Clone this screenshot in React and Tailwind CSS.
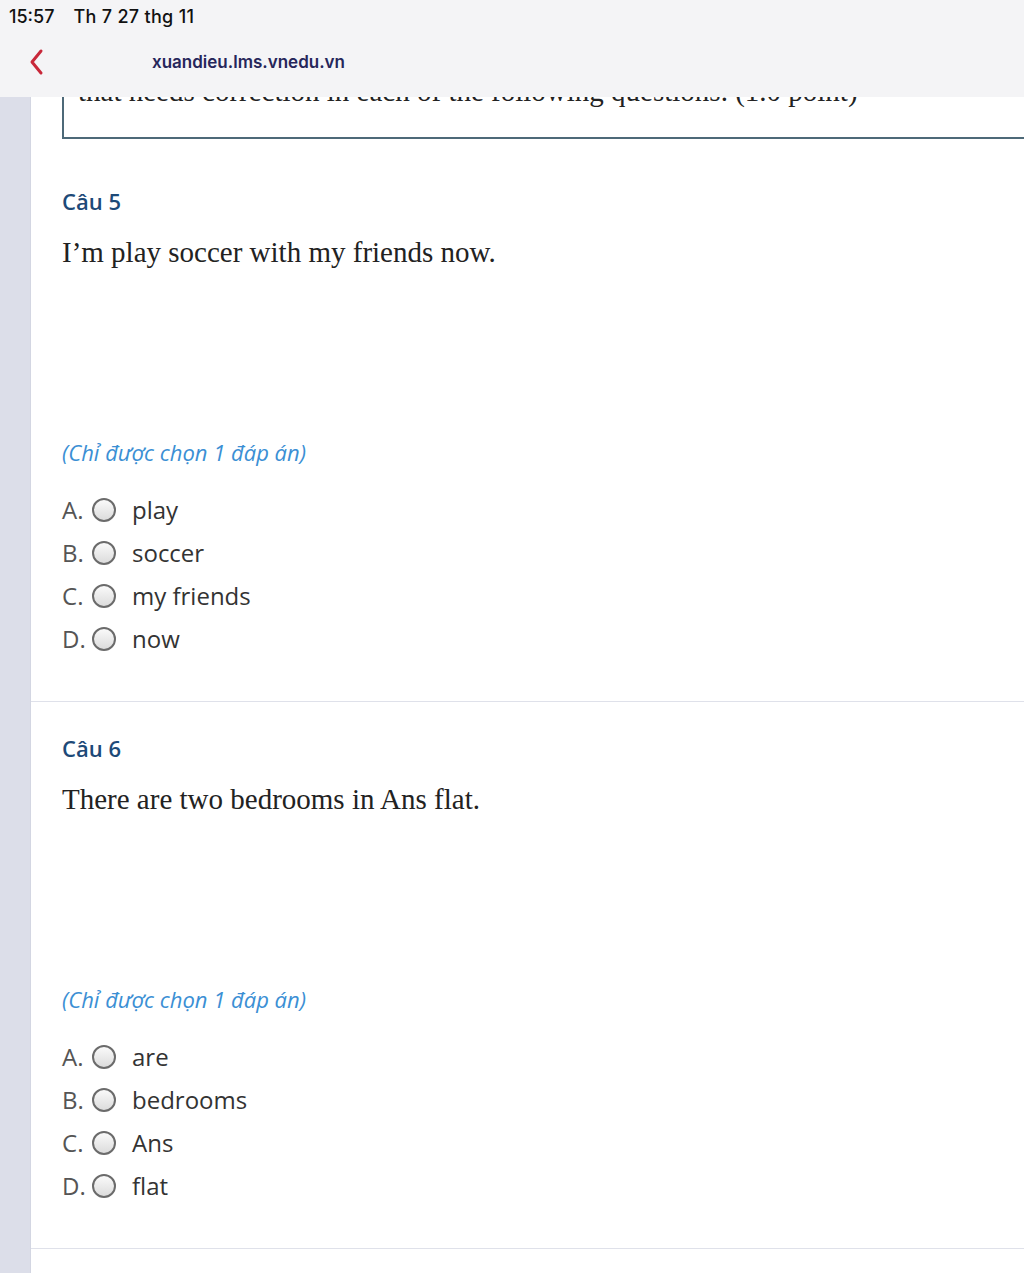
import React from 'react';

const questions = [
  {
    no: 5,
    text: 'I’m play soccer with my friends now.',
    options: ['play', 'soccer', 'my friends', 'now'],
  },
  {
    no: 6,
    text: 'There are two bedrooms in Ans flat.',
    options: ['are', 'bedrooms', 'Ans', 'flat'],
  },
];

function Radio() {
  return (
    <span className="inline-block w-[24px] h-[24px] rounded-full border-2 border-[#6b6b6b] bg-gradient-to-b from-[#fafafa] to-[#dcdcdc] shrink-0" />
  );
}

function QuestionCard({ q, first }) {
  return (
    <div className={`bg-white border-b border-[#dfe1ea] pl-[31px] pb-[41px] ${first ? 'pt-[47px]' : 'pt-[31px]'}`}>
      <div className="text-[22px] leading-[30px] text-[#1d4a78] font-['Open_Sans',sans-serif] font-semibold">Câu {q.no}</div>
      <div className="mt-[18px] text-[29px] leading-[36px] text-[#222] font-['Liberation_Serif',serif]">{q.text}</div>
      <div className="mt-[167px] text-[22px] leading-[30px] italic text-[#3b8fd4] font-['Open_Sans',sans-serif]">
        (Chỉ được chọn 1 đáp án)
      </div>
      <div className="mt-[21px] flex flex-col font-['Open_Sans',sans-serif]">
        {q.options.map((o, i) => (
          <div key={o} className="h-[43px] flex items-center text-[24px] text-[#333]">
            <span className="w-[30px] text-[#555]">{'ABCD'[i]}.</span>
            <Radio />
            <span className="ml-[16px]">{o}</span>
          </div>
        ))}
      </div>
    </div>
  );
}

export default function App() {
  return (
    <div className="w-[1024px] h-[1273px] overflow-hidden bg-[#dcdee9] flex flex-col">
      {/* safari top bar */}
      <div className="h-[97px] bg-[#f4f4f6] shrink-0 font-['Inter',sans-serif]">
        <div className="pt-[3px] pl-[9px] text-[18px] font-medium text-[#111] flex gap-[19px]">
          <span>15:57</span>
          <span className="tracking-[0.3px]">Th 7 27 thg 11</span>
        </div>
        <div className="flex items-center mt-[18px]">
          <svg width="20" height="28" viewBox="0 0 20 28" className="ml-[27px]">
            <path d="M14 3 L5 14 L14 25" fill="none" stroke="#c8283a" strokeWidth="3" strokeLinecap="round" strokeLinejoin="round" />
          </svg>
          <span className="ml-[105px] text-[17px] font-semibold text-[#26265a] mt-[2px]">xuandieu.lms.vnedu.vn</span>
        </div>
      </div>

      <div className="flex-1 flex">
        <div className="w-[30px] shrink-0 bg-[#dcdee9]" />
        <div className="flex-1 bg-white border-l border-[#d3d6e2]">
          <div className="ml-[31px] h-[42px] border-l-2 border-b-2 border-[#4d6978] overflow-hidden">
            <div className="-mt-[24px] pl-[14px] text-[29px] leading-[36px] text-[#222] font-['Liberation_Serif',serif] whitespace-nowrap">
              that needs correction in each of the following questions. (1.0 point)
            </div>
          </div>
          {questions.map((q, i) => (
            <QuestionCard key={q.no} q={q} first={i === 0} />
          ))}
          <div className="bg-white h-[40px]" />
        </div>
      </div>
    </div>
  );
}
